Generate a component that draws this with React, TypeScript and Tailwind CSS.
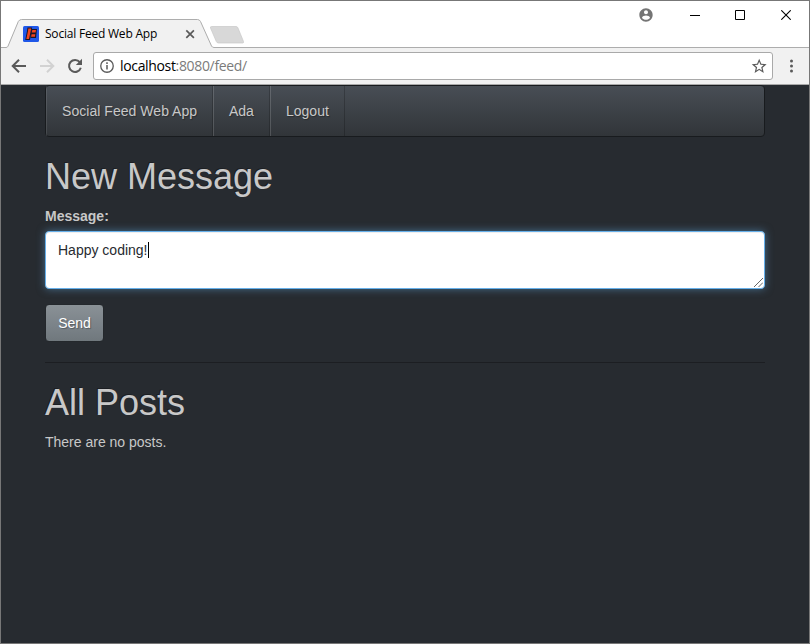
import React from 'react';

function Favicon() {
  return (
    <svg width="16" height="16" viewBox="0 0 16 16" className="shrink-0">
      <rect width="16" height="16" rx="1.5" fill="#1f57e8" />
      <path d="M4.500 1.500H9.200L7 14H2.200L4 5Z" fill="#1b1624" />
      <path d="M8.500 3H14L13 12H7.500Z" fill="#1b1624" />
      <path d="M5.300 2.500H8.200L6 13H3.300L5 5Z" fill="#f0451f" />
      <path d="M9.300 4H13L12.600 6.500H8.800ZM8.600 8.300H12.300L11.900 10.800H8.100Z" fill="#f0451f" />
    </svg>
  );
}

function TabStrip() {
  return (
    <div className="relative flex h-[47px] shrink-0 bg-white">
      <svg className="absolute left-0 top-0" width="808" height="47" viewBox="1 1 808 47">
        <path d="M6.500 48L7.500 46.500L18.300 21.500Q19.500 19.500 21.500 19.500H197.500Q199.500 19.500 200.500 21.500L212 46.500L213 48Z" fill="#f1f1f1" />
        <path d="M1 47.500H6Q7.500 47.500 8 46.200L18.300 21.500Q19.500 19.500 21.500 19.500H197.500Q199.500 19.500 200.500 21.500L211.500 46Q212.300 47.500 214 47.500H809" fill="none" stroke="#adadad" />
        <path d="M211.500 26.500H236Q237.500 26.500 238 28L243.500 41.500Q244 43 242.500 43H218.500Q217 43 216.300 41.500L210.500 28Q210 26.500 211.500 26.500Z" fill="#d8d8d8" stroke="#c8c8c8" strokeWidth=".7" />
      </svg>
      <div className="relative mt-[19px] flex h-[28px] w-[212px] items-center pl-[22px]">
        <Favicon />
        <span className="ml-[6px] w-[140px] whitespace-nowrap font-['Open_Sans',sans-serif] text-[12px] leading-4 tracking-[-0.21px] text-black">Social Feed Web App</span>
        <svg width="10" height="10" viewBox="0 0 10 10" className="shrink-0">
          <path d="M1.300 1.300L8.900 8.900M8.900 1.300L1.300 8.900" stroke="#5a5a5a" strokeWidth="1.700" />
        </svg>
      </div>
      <div className="relative ml-auto flex h-7 items-center pr-[18px]">
        <svg width="16" height="16" viewBox="0 0 24 24" className="mr-[36px]">
          <path fill="#757575" d="M12 2C6.480 2 2 6.480 2 12s4.480 10 10 10 10-4.480 10-10S17.520 2 12 2zm0 3c1.660 0 3 1.340 3 3s-1.340 3-3 3-3-1.340-3-3 1.340-3 3-3zm0 14.200c-2.500 0-4.710-1.280-6-3.220.03-1.990 4-3.080 6-3.080 1.990 0 5.970 1.090 6 3.080-1.290 1.940-3.500 3.220-6 3.220z" />
        </svg>
        <svg width="10" height="11" viewBox="0 0 10 11" className="mr-[35px]">
          <path d="M0 5.500H10" stroke="#000" />
        </svg>
        <svg width="10" height="10" viewBox="0 0 10 10" className="mr-[36px]">
          <path d="M.5.5H9.500V9.500H.5Z" fill="none" stroke="#000" />
        </svg>
        <svg width="10" height="10" viewBox="0 0 10 10">
          <path d="M.3.3L9.700 9.700M9.700.3L.3 9.700" stroke="#000" strokeWidth="1.100" />
        </svg>
      </div>
    </div>
  );
}

function Toolbar() {
  return (
    <div className="flex h-[37px] shrink-0 items-center border-b border-[#a9a9a9] bg-[#f1f1f1] pl-[10px]">
      <svg width="16" height="16" viewBox="0 0 16 16" className="shrink-0">
        <path d="M15 8H2M8 1.700L1.700 8L8 14.300" fill="none" stroke="#5a5a5a" strokeWidth="2" />
      </svg>
      <svg width="16" height="16" viewBox="0 0 16 16" className="ml-3 shrink-0">
        <path d="M1 8H14M8 1.700L14.300 8L8 14.300" fill="none" stroke="#d2d2d2" strokeWidth="2" />
      </svg>
      <svg width="16" height="16" viewBox="0 0 16 16" className="ml-3 shrink-0">
        <path d="M12.800 4.200A6 6 0 1 0 13.800 9.700" fill="none" stroke="#5a5a5a" strokeWidth="2" />
        <path d="M15 .8V7H8.800Z" fill="#5a5a5a" />
      </svg>
      <div className="ml-[10px] flex h-7 w-[680px] items-center rounded-[3px] border border-[#a9a9a9] bg-white pl-[6px] pr-[5px]">
        <svg width="14" height="14" viewBox="0 0 14 14">
          <circle cx="7" cy="7" r="6.250" fill="none" stroke="#5a5a5a" strokeWidth="1.300" />
          <path d="M7 6V10.500M7 3.300V4.900" stroke="#5a5a5a" strokeWidth="1.500" />
        </svg>
        <span className="ml-[6px] whitespace-nowrap font-['Open_Sans',sans-serif] text-[14px] leading-5 tracking-[-0.34px] text-[#7b7b7b]"><span className="text-black">localhost</span>:8080/feed/</span>
        <svg width="16" height="16" viewBox="1 1 21.500 21.500" className="ml-auto">
          <path fill="#5a5a5a" d="M22 9.240l-7.190-.62L12 2 9.190 8.630 2 9.240l5.460 4.730L5.820 21 12 17.270 18.180 21l-1.630-7.030L22 9.240zM12 15.400l-3.760 2.270 1-4.280-3.320-2.880 4.380-.38L12 6.100l1.710 4.040 4.380.38-3.320 2.880 1 4.280L12 15.400z" />
        </svg>
      </div>
      <svg width="4" height="14" viewBox="0 0 4 14" className="ml-[16px] shrink-0" fill="#5a5a5a">
        <circle cx="2.500" cy="2" r="1.500" /><circle cx="2.500" cy="7" r="1.500" /><circle cx="2.500" cy="12" r="1.500" />
      </svg>
    </div>
  );
}

function Navbar() {
  return (
    <nav className="flex h-[52px] rounded-[4px] border border-[#181b1e] bg-[linear-gradient(#484e55,#3a3f44_60%,#313539)] text-[14px] leading-5 [text-shadow:1px_1px_1px_rgba(0,0,0,0.3)]">
      <a className="w-[167px] whitespace-nowrap border-l border-r border-l-white/10 border-r-black/20 py-[15px] pl-[15px] tracking-[0.04px]">Social Feed Web App</a>
      <a className="w-[57px] border-l border-r border-l-white/15 border-r-black/20 py-[15px] pl-[15px]">Ada</a>
      <a className="w-[75px] border-l border-r border-l-white/15 border-r-black/20 py-[15px] pl-[15px]">Logout</a>
    </nav>
  );
}

export default function App() {
  return (
    <div className="flex h-[644px] w-[810px] flex-col overflow-hidden border border-[#777777] bg-[#272b30]">
      <TabStrip />
      <Toolbar />
      <main className="px-[44px] font-['Liberation_Sans',Arial,sans-serif] text-[14px] leading-5 text-[#c8c8c8]">
        <Navbar />
        <h1 className="mt-5 text-[36px] font-medium leading-[40px] [text-shadow:-1px_-1px_0_rgba(0,0,0,0.3)]">New Message</h1>
        <label className="mt-[9px] block font-bold">Message:</label>
        <div className="relative mt-[5px] flex h-[58px] rounded-[4px] border border-[#66afe9] bg-white px-3 py-2 text-[#272b30] shadow-[inset_0_1px_1px_rgba(0,0,0,0.075),0_0_8px_rgba(102,175,233,0.5)]">
          <span>Happy coding!</span>
          <span className="mt-[2px] h-4 w-px bg-black" />
          <svg className="absolute bottom-px right-px" width="9" height="9" viewBox="0 0 9 9">
            <path d="M0 9L9 0M4.500 9L9 4.500" stroke="#555" strokeWidth=".9" />
          </svg>
        </div>
        <button className="mt-[15px] block h-[38px] w-[59px] rounded-[4px] border border-[#24282c] bg-[linear-gradient(#8a9196,#7a8288_60%,#70787d)] text-white [text-shadow:1px_1px_1px_rgba(0,0,0,0.3)]">Send</button>
        <hr className="mt-5 border-t border-[#1c1e22]" />
        <h1 className="mt-5 text-[36px] font-medium leading-[40px] [text-shadow:-1px_-1px_0_rgba(0,0,0,0.3)]">All Posts</h1>
        <p className="mt-[9px]">There are no posts.</p>
      </main>
    </div>
  );
}
